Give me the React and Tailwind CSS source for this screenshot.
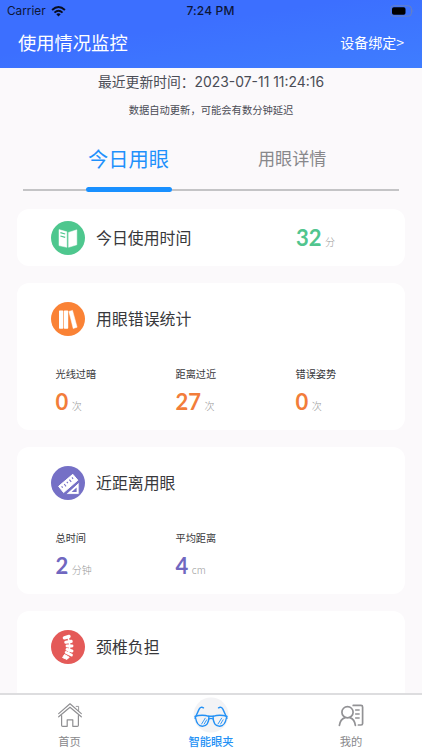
import React from 'react';

const CJK = "font-['Noto_Sans_CJK_SC',sans-serif]";

function BookIcon() {
  return (
    <svg viewBox="0 0 34 34" className="size-[34px]">
      <circle cx="17" cy="17" r="17" fill="#4ec78e" />
      <path d="M8 8.6 L15.8 10.8 V26.3 L8 24.6Z" fill="#fff" stroke="#fff" strokeWidth=".5" strokeLinejoin="round" />
      <path d="M17.6 11.4 L25.8 8.8 V23.8 L17.6 26.3Z" fill="#fff" stroke="#fff" strokeWidth=".5" strokeLinejoin="round" />
      <path d="M9.4 11.6 l4.8 1.4 M9.4 15 l4.8 1.4" stroke="#4ec78e" strokeWidth="1.1" />
    </svg>
  );
}

function BooksIcon() {
  return (
    <svg viewBox="0 0 34 34" className="size-[34px]">
      <circle cx="17" cy="17" r="17" fill="#fa8235" />
      <rect x="8" y="8.4" width="4.3" height="18.4" rx=".7" fill="#fff" />
      <rect x="12.9" y="8.4" width="4.3" height="18.4" rx=".7" fill="#fff" />
      <path d="M17.9 9.4 L21.5 8.4 L26.1 25.2 L22.2 26.5Z" fill="#fff" stroke="#fff" strokeWidth=".5" strokeLinejoin="round" />
    </svg>
  );
}

function RulerIcon() {
  return (
    <svg viewBox="0 0 34 34" className="size-[34px]">
      <circle cx="17" cy="17" r="17" fill="#7570c6" />
      <path d="M7.6 20.3 L21.8 8.3 L26.8 14.2 L12.6 26.6Z" fill="#fff" stroke="#fff" strokeWidth="1" strokeLinejoin="round" />
      <path d="M10.6 20.3l1.1 1.4 M13.2 18l1.8 2.3 M15.8 15.8l1.1 1.4 M18.4 13.6l1.8 2.3 M21 11.4l1.1 1.4" stroke="#7570c6" strokeWidth="1.1" />
      <path d="M28.2 16 V28.4 H14.6Z" fill="#fff" stroke="#7570c6" strokeWidth="1" strokeLinejoin="round" />
      <path d="M25.6 21.6 V26 H20.6Z" fill="#7570c6" />
    </svg>
  );
}

function SpineIcon() {
  return (
    <svg viewBox="0 0 34 34" className="size-[34px]">
      <circle cx="17" cy="17" r="17" fill="#e45a58" />
      <g stroke="#fff" strokeLinecap="round" fill="none">
        <path d="M13.4 7.8 L18 6.5" strokeWidth="3.4" />
        <path d="M14.8 12.2 L20.2 11.4" strokeWidth="3.1" />
        <path d="M16 16 L21 16" strokeWidth="2.9" />
        <path d="M16 19.4 L21 21" strokeWidth="2.9" />
        <path d="M15.2 22.5 L20.4 25" strokeWidth="2.9" />
        <path d="M17.2 8 Q20 15 17.6 23" strokeWidth="1.6" />
      </g>
      <path d="M13.5 24.5 L18.2 27.2 L16 29.4 L11.6 27.6Z" fill="#fff" stroke="#fff" strokeWidth="1" strokeLinejoin="round" />
    </svg>
  );
}

function HomeIcon() {
  return (
    <svg viewBox="0 0 24 24" className="size-6" fill="none" stroke="#8f8f92" strokeWidth="1.2" strokeLinejoin="round" strokeLinecap="round">
      <path d="M.7 10.6 L12 .8 L23.3 10.6" />
      <path d="M.7 13.8 L12 4.2 L23.3 13.8" />
      <path d="M3.6 12.6 V22.2 Q3.6 23.3 4.7 23.3 H9.2 V16.8 H14.8 V23.3 H19.3 Q20.4 23.3 20.4 22.2 V12.6" />
      <path d="M18.2 3.4 H20.6 V7.6" strokeWidth=".9" />
    </svg>
  );
}

function GlassesIcon() {
  return (
    <svg viewBox="0 0 36 36" className="size-9">
      <circle cx="18" cy="18" r="17.5" fill="#f3f3f5" />
      <g fill="none" stroke="#2491f5" strokeWidth="1.4" strokeLinecap="round" strokeLinejoin="round">
        <path d="M10.5 10.8 Q7.7 9.2 6 12.4 L2 21.2 M25.5 10.8 Q28.3 9.2 30 12.4 L34 21.2" />
        <path d="M2 19.4 Q9 17.3 16 19.3 Q15.9 29.4 9.2 29.2 Q4 29 2.6 21" />
        <path d="M34 19.4 Q27 17.3 20 19.3 Q20.1 29.4 26.8 29.2 Q32 29 33.4 21" />
        <path d="M15.5 19.3 H20.5 M16 22 Q18 20.8 20 22" />
        <path d="M8.6 27 L12.2 21.2 M11.2 27 L13.7 22.8 M25 27 L28.6 21.2 M27.6 27 L30.1 22.8" strokeWidth=".9" />
      </g>
    </svg>
  );
}

function ProfileIcon() {
  return (
    <svg viewBox="0 0 26 24" className="h-6 w-[26px]" fill="none" stroke="#929295" strokeWidth="1.7" strokeLinecap="round" strokeLinejoin="round">
      <circle cx="9.5" cy="9.2" r="5.6" />
      <path d="M1.4 22.4 Q2.2 16.4 7 14.6 M12 14.6 Q16.6 16.4 17.4 22.4" />
      <path d="M15.2 2.4 H23 Q24.6 2.4 24.6 4 V20.4 Q24.6 22 23 22 H20.4" />
      <path d="M17.6 7 H21.2 M17.6 11 H21.2 M17.6 15 H21.2" strokeWidth="1.3" />
    </svg>
  );
}

function Value({ n, unit, color }) {
  return (
    <div className={color}>
      <div className="flex h-6 items-baseline gap-[3.5px] whitespace-nowrap">
        <span className="font-[Lato] text-[22px] leading-6 font-bold">{n}</span>
        <span className="text-[10px] leading-6 font-light text-[#999999]">{unit}</span>
      </div>
    </div>
  );
}

function Heading({ icon, title }) {
  return (
    <div className="flex h-[34px] items-center gap-[11px]">
      {icon}
      <h2 className="text-[15.9px] leading-[34px] text-[#38383b]">{title}</h2>
    </div>
  );
}

function StatCard({ icon, title, stats, color }) {
  return (
    <section className="h-[147px] rounded-xl bg-white pt-[19px] pl-[34px]">
      <Heading icon={icon} title={title} />
      <div className="mt-[30px] grid grid-cols-[120px_120px_120px] pl-[4.5px]">
        {stats.map((s) => (
          <div key={s.label}>
            <p className="text-[10.2px] leading-4 text-[#38383b]">{s.label}</p>
            <div className="mt-2">
              <Value n={s.n} unit={s.unit} color={color} />
            </div>
          </div>
        ))}
      </div>
    </section>
  );
}

export default function App() {
  return (
    <div className={`flex h-[750px] w-[422px] flex-col overflow-hidden bg-[#fbf9fb] ${CJK}`}>
      <header className="h-[68px] shrink-0 bg-linear-to-br from-[#3c6fff] from-40% to-[#3f7dff]">
        <div className="grid h-[22px] grid-cols-3 items-center pr-2 pl-[7px] font-['Inter',sans-serif] text-[#0d1638]">
          <div className="flex items-center gap-[5px]">
            <span className="text-[11.8px] leading-[22px]">Carrier</span>
            <svg viewBox="0 0 16 12" className="h-[11px] w-[15px]" fill="none" stroke="#080d20" strokeWidth="2.1">
              <path d="M1 4.4 Q8 -2 15 4.4 M3.6 7.2 Q8 3.2 12.4 7.2" />
              <path d="M5.6 9 Q8 7 10.4 9 L8 11.5Z" fill="#080d20" stroke="none" />
            </svg>
          </div>
          <span className="text-center text-[12px] leading-[22px] font-medium tracking-[0.15px] whitespace-nowrap">7:24 PM</span>
          <svg viewBox="0 0 24 12" className="h-3 w-6 justify-self-end">
            <rect x=".6" y=".8" width="20.8" height="10.4" rx="3" fill="none" stroke="#6880c0" />
            <rect x="2" y="2.2" width="13.5" height="7.6" rx="1.8" fill="#000" />
            <path d="M22.6 4 Q24 6 22.6 8Z" fill="#6880c0" />
          </svg>
        </div>
        <div className="flex h-10 items-center justify-between pr-[18px] pl-[18px] text-white">
          <h1 className="text-[18.3px] leading-10">使用情况监控</h1>
          <a className="text-[14px] leading-10">设备绑定&gt;</a>
        </div>
      </header>

      <main className="min-h-0 flex-1 overflow-hidden">
        <div className="flex h-7 items-center justify-center whitespace-nowrap text-[#4a4c55]">
          <span className="pb-px text-[13.8px]">最近更新时间：</span>
          <span className="font-['Inter',sans-serif] text-[13.9px]">2023-07-11 11:24:16</span>
        </div>
        <p className="h-7 text-center text-[10.3px] leading-7 text-[#4a4c55]">数据自动更新，可能会有数分钟延迟</p>

        <nav className="mx-[23px] flex h-[68px] flex-col">
          <div className="flex h-[63px] items-center pt-[5px] pl-[65px] leading-[58px]">
            <span className="w-[170px] text-[20.3px] text-[#1f91fb]">今日用眼</span>
            <span className="text-[17.1px] text-[#88888b]">用眼详情</span>
          </div>
          <div className="flex h-[5px] items-center">
            <div className="h-0.5 w-[63px] bg-[#c4c4c6]" />
            <div className="h-[5px] w-[86px] rounded-full bg-[#1990ff]" />
            <div className="h-0.5 flex-1 bg-[#c4c4c6]" />
          </div>
        </nav>

        <div className="mx-[17px] mt-[17px] flex flex-col gap-[17px]">
          <section className="flex h-[57px] items-center rounded-xl bg-white pl-[34px]">
            <div className="w-[245px]">
              <Heading icon={<BookIcon />} title="今日使用时间" />
            </div>
            <Value n="32" unit="分" color="text-[#51c58e]" />
          </section>
          <StatCard
            icon={<BooksIcon />}
            title="用眼错误统计"
            color="text-[#f27d3a]"
            stats={[
              { label: '光线过暗', n: 0, unit: '次' },
              { label: '距离过近', n: 27, unit: '次' },
              { label: '错误姿势', n: 0, unit: '次' },
            ]}
          />
          <StatCard
            icon={<RulerIcon />}
            title="近距离用眼"
            color="text-[#7067c0]"
            stats={[
              { label: '总时间', n: 2, unit: '分钟' },
              { label: '平均距离', n: 4, unit: 'cm' },
            ]}
          />
          <StatCard icon={<SpineIcon />} title="颈椎负担" color="text-[#e45a58]" stats={[]} />
        </div>
      </main>

      <footer className="grid h-[57px] shrink-0 grid-cols-[139px_144px_139px] border-t-2 border-[#dddddf] bg-white text-[11.3px] leading-4 text-[#88888b]">
        <div className="flex flex-col items-center pt-2">
          <HomeIcon />
          <span className="mt-[6px]">首页</span>
        </div>
        <div className="flex flex-col items-center pt-[2px] font-medium text-[#2491f5]">
          <GlassesIcon />
          <span>智能眼夹</span>
        </div>
        <div className="flex flex-col items-center pt-2 pr-[3px]">
          <ProfileIcon />
          <span className="mt-[6px]">我的</span>
        </div>
      </footer>
    </div>
  );
}
